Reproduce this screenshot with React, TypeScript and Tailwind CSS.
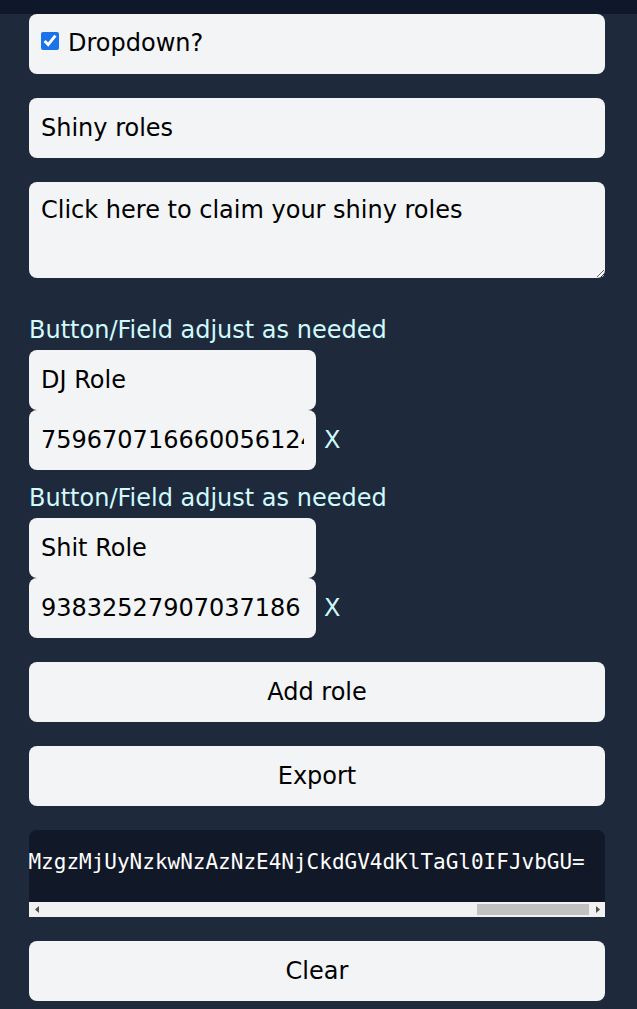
import React, { useEffect, useRef } from "react";

const ff = { fontFamily: '"DejaVu Sans", sans-serif' };

const CODE =
  "eyJkcm9wZG93biI6dHJ1ZX0KU2hpbnkgcm9sZXMKQ2xpY2sgaGVyZSB0byBjbGFpbSB5b3VyIHNoaW55IHJvbGVzCkRKIFJvbGUKNzU5NjcwNzE2NjYwMDU2MTI0NApTaGl0IFJvbGUKOTM4MzI1Mjc5MDcwMzcxODYzMzgzMjUyNzkwNzAzNzE4NjCkdGV4dKlTaGl0IFJvbGU=";

function RoleBlock({ name, id }: { name: string; id: string }) {
  return (
    <>
      <div className="text-2xl leading-8 text-[#cffafe]">Button/Field adjust as needed</div>
      <div className="mt-1 flex flex-col">
        <input
          readOnly
          value={name}
          className="h-[60px] w-[287px] rounded-lg bg-gray-100 px-3 pb-px text-2xl text-black outline-none"
          style={ff}
        />
        <div className="flex items-center">
          <input
            readOnly
            value={id}
            className="h-[60px] w-[287px] rounded-lg bg-gray-100 px-3 pb-px text-2xl text-black outline-none"
            style={ff}
          />
          <span className="ml-2 text-2xl text-[#cffafe]">X</span>
        </div>
      </div>
    </>
  );
}

export default function App() {
  const preRef = useRef<HTMLPreElement>(null);
  useEffect(() => {
    if (preRef.current) preRef.current.scrollLeft = 100000;
  }, []);
  return (
    <div className="min-h-screen bg-[#1e293b]" style={ff}>
      <div className="h-[14px] bg-[#0f172a]" />
      <div className="ml-[29px] flex w-[576px] flex-col">
        <label className="flex h-[60px] items-center rounded-lg bg-gray-100 px-3 pb-[3px] text-2xl text-black">
          <input type="checkbox" defaultChecked className="mr-[9px] mb-[4px] h-[18px] w-[18px] accent-[#1a73e8]" />
          Dropdown?
        </label>
        <input
          readOnly
          value="Shiny roles"
          className="mt-6 h-[60px] rounded-lg bg-gray-100 px-3 pb-px text-2xl text-black outline-none"
          style={ff}
        />
        <textarea
          readOnly
          value="Click here to claim your shiny roles"
          className="mt-6 h-[96px] rounded-lg bg-gray-100 px-3 pt-[10px] text-2xl leading-9 text-black outline-none"
          style={ff}
        />
        <div className="mt-[36px]">
          <RoleBlock name="DJ Role" id="7596707166600561244" />
        </div>
        <div className="mt-3">
          <RoleBlock name="Shit Role" id="93832527907037186" />
        </div>
        <button className="mt-6 h-[60px] rounded-lg bg-gray-100 pb-px text-2xl text-black">Add role</button>
        <button className="mt-6 h-[60px] rounded-lg bg-gray-100 pb-px text-2xl text-black">Export</button>
        <div className="mt-6 overflow-hidden rounded-t-lg bg-[#111827]">
          <pre
            ref={preRef}
            className="overflow-hidden px-5 pt-4 pb-6 text-[21px] leading-8 text-white"
            style={{ fontFamily: '"DejaVu Sans Mono", monospace' }}
          >
            {CODE}
          </pre>
          <div className="flex h-[15px] items-center bg-[#f1f1f1]">
            <div className="flex w-[15px] items-center justify-center">
              <svg width="4" height="7" viewBox="0 0 4 7">
                <polygon points="4,0 4,7 0,3.5" fill="#505050" />
              </svg>
            </div>
            <div className="flex flex-1 justify-end pr-px">
              <div className="h-[11px] w-[112px] bg-[#c1c1c1]" />
            </div>
            <div className="flex w-[15px] items-center justify-center">
              <svg width="4" height="7" viewBox="0 0 4 7">
                <polygon points="0,0 0,7 4,3.5" fill="#505050" />
              </svg>
            </div>
          </div>
        </div>
        <button className="mt-6 h-[60px] rounded-lg bg-gray-100 pb-px text-2xl text-black">Clear</button>
      </div>
    </div>
  );
}
